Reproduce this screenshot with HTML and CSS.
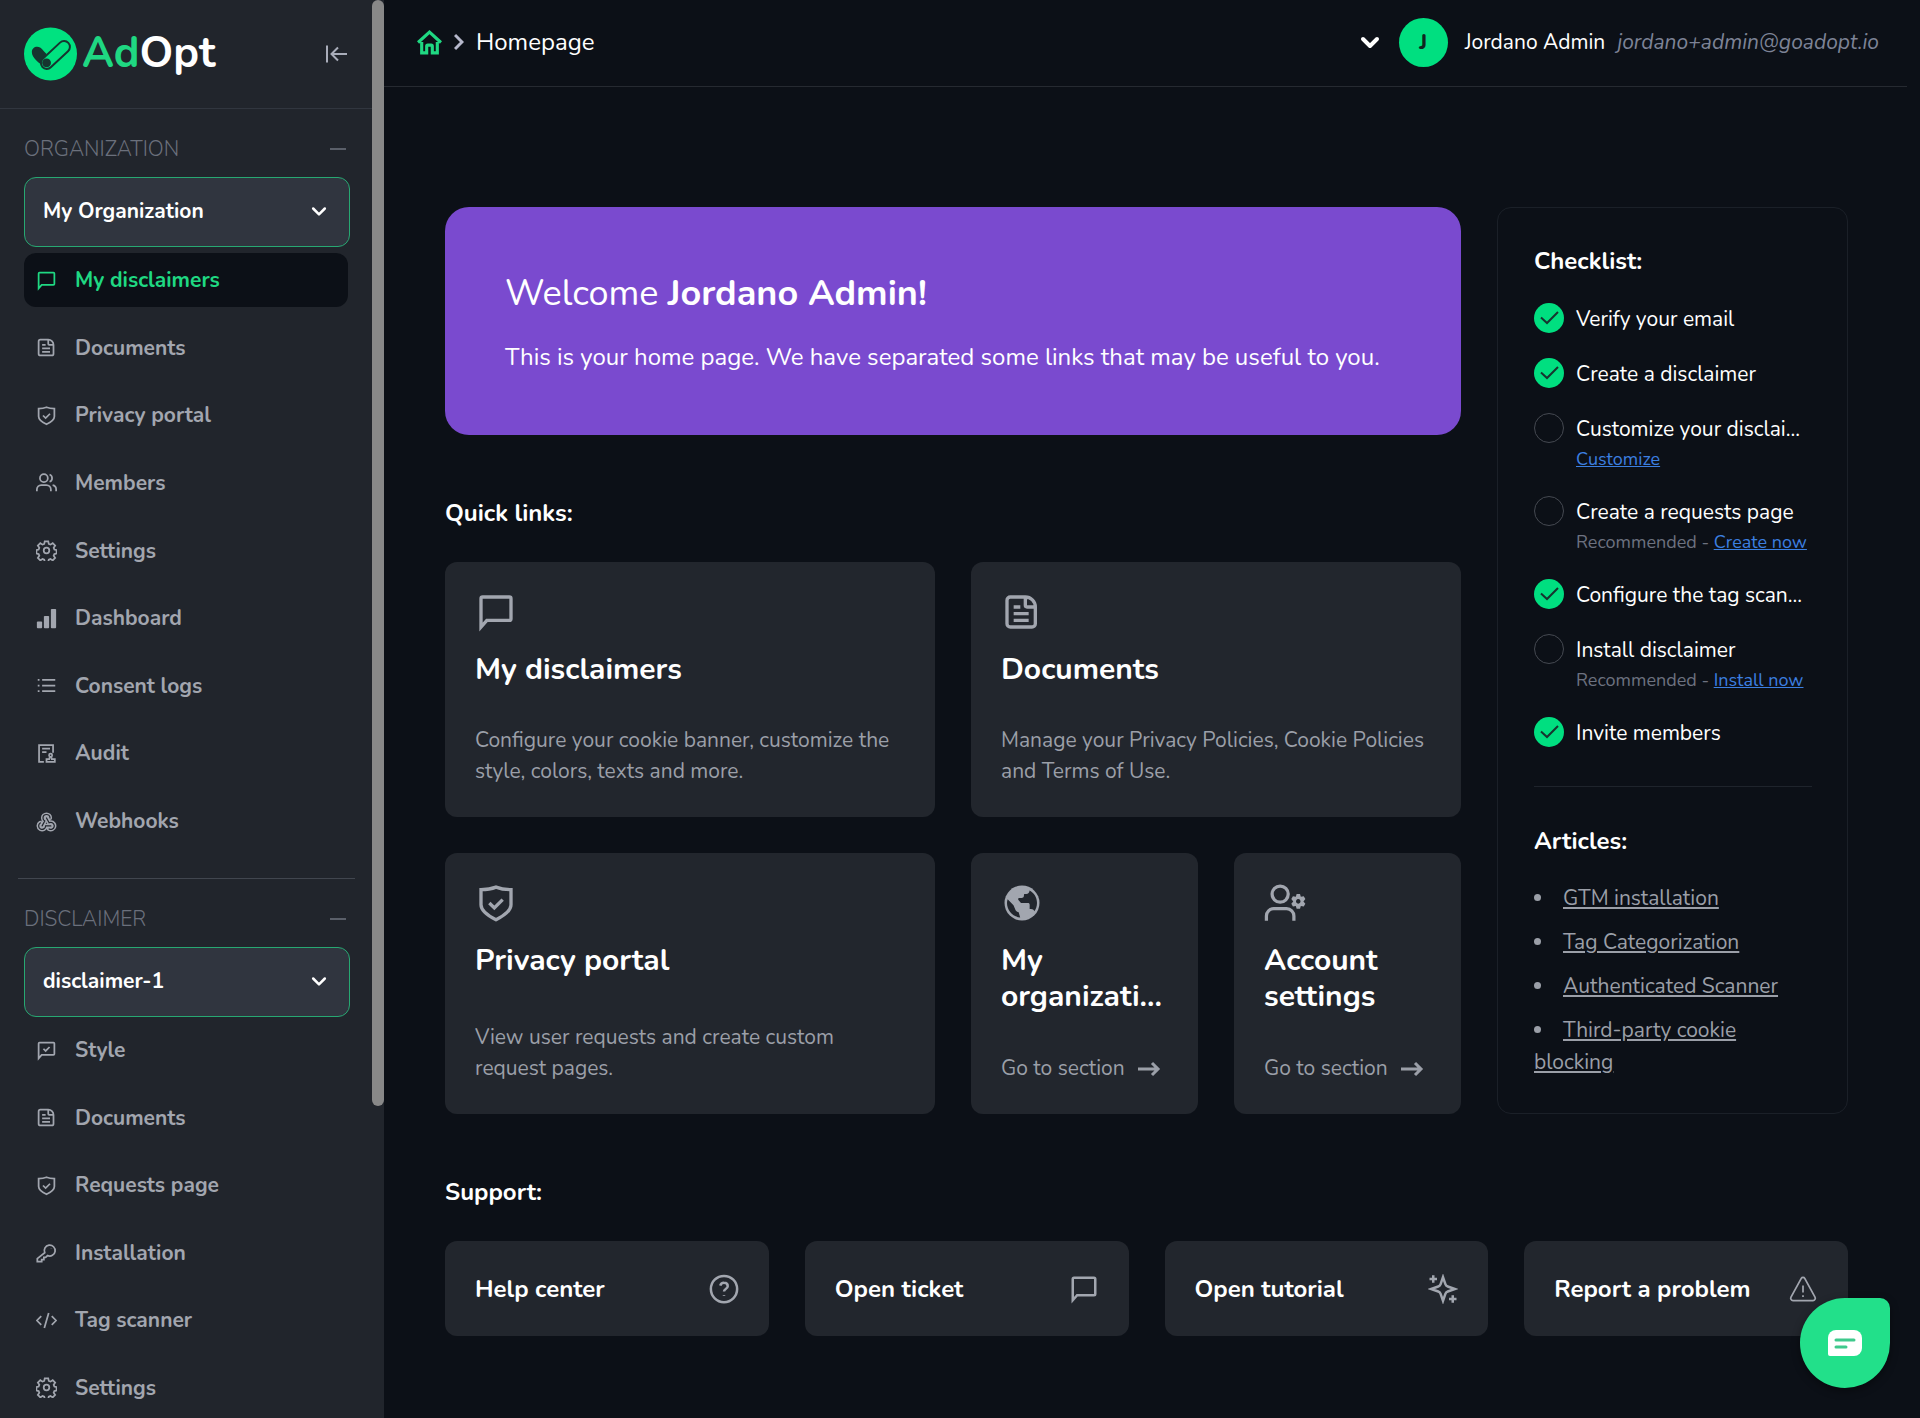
FILE: index.html
```html
<!DOCTYPE html>
<html lang="en">
<head>
  <meta charset="UTF-8" />
  <meta name="viewport" content="width=device-width, initial-scale=1.0" />
  <title>AdOpt - Homepage</title>
  <link rel="stylesheet" href="styles.css">
</head>
<body>

<!-- icon set -->
<svg class="sprite" aria-hidden="true">
  <symbol id="i-chat" viewBox="0 0 24 24"><path d="M3 21V4a1 1 0 0 1 1-1h16a1 1 0 0 1 1 1v12a1 1 0 0 1-1 1H6.500z" /></symbol>
  <symbol id="i-chat-check" viewBox="0 0 24 24"><path d="M3 21V4a1 1 0 0 1 1-1h16a1 1 0 0 1 1 1v12a1 1 0 0 1-1 1H6.500zM8.500 10l2.500 2.500 4.500-4.500" /></symbol>
  <symbol id="i-doc" viewBox="0 0 24 24"><path d="M5 3h9a6 6 0 0 1 6 6v10a2 2 0 0 1-2 2H5a2 2 0 0 1-2-2V5a2 2 0 0 1 2-2zM14 3v5a1 1 0 0 0 1 1h5M7 9h4M7 13h9M7 17h9" /></symbol>
  <symbol id="i-shield" viewBox="0 0 24 24"><path d="M12 2.500c3 1.200 5.500 1.500 9 1.500v9c0 4-5 7-9 9-4-2-9-5-9-9V4c3.500 0 6-.3 9-1.500zM8 12l3 3 5-5" /></symbol>
  <symbol id="i-users" viewBox="0 0 24 24"><circle cx="9" cy="7" r="4.500" /><path d="M1 22v-2a5 5 0 0 1 5-5h6a5 5 0 0 1 5 5v2M15.500 2.800a4.500 4.500 0 0 1 0 8.400M19 15a5 5 0 0 1 4 5v2" /></symbol>
  <symbol id="i-gear" viewBox="0 0 24 24"><circle cx="12" cy="12" r="3.200" /><path d="M10 1.500h4l.6 3 1.900.8 2.600-1.700 2.800 2.800-1.700 2.600.8 1.900 2.500.6v4l-2.500.6-.8 1.900 1.700 2.500-2.800 2.800-2.600-1.700-1.900.8-.6 2.600h-4l-.6-2.600-1.900-.8-2.600 1.700-2.800-2.800 1.700-2.500-.8-1.900-2.500-.6v-4l2.500-.6.8-1.900-1.700-2.600 2.800-2.800 2.600 1.700 1.900-.8z" /></symbol>
  <symbol id="i-bars" viewBox="0 0 24 24"><g fill="currentColor" stroke="none"><rect x="1" y="15.500" width="6" height="7.500" rx="1" /><rect x="9" y="9" width="6" height="14" rx="1" /><rect x="17" y="1" width="6" height="22" rx="1" /></g></symbol>
  <symbol id="i-list" viewBox="0 0 24 24"><path d="M7 5.500h15M7 12h15M7 18.500h15M2 5.500h2M2 12h2M2 18.500h2" /></symbol>
  <symbol id="i-audit" viewBox="0 0 24 24"><path d="M9 21.500H3.500v-19h16V11M7 6.500h9M7 10.500h5M12 21.500h9.500v-3.200H18l-.5-2.300h-1.800l-.5 2.300H12z" /><circle cx="16.700" cy="14" r="1.800" /></symbol>
  <symbol id="i-webhook" viewBox="0 0 24 24">
    <g stroke-linecap="round">
      <path stroke-width="4.800" d="M4.900 13.600A4 4 0 1 0 11 17h6M15 20.500A4 4 0 1 0 17 13c-.7 0-1.400.2-2 .5L12 8M16 8a4 4 0 1 0-8 0c0 1.500.8 2.800 2 3.500L7 17" />
      <path class="hollow" stroke-width="1.400" d="M4.900 13.600A4 4 0 1 0 11 17h6M15 20.500A4 4 0 1 0 17 13c-.7 0-1.400.2-2 .5L12 8M16 8a4 4 0 1 0-8 0c0 1.500.8 2.800 2 3.500L7 17" />
    </g>
  </symbol>
  <symbol id="i-key" viewBox="0 0 24 24"><path d="M10 12.300a6.200 6.200 0 1 1 3.200 3.200L11 17.500H9V20H6.500v2.500H1.500V19zM17.500 7v.500" /></symbol>
  <symbol id="i-code" viewBox="0 0 24 24"><path d="M6 7l-5 5 5 5M18 7l5 5-5 5M14.500 3.500l-5 17" /></symbol>
  <symbol id="i-globe" viewBox="0 0 24 24"><circle cx="12" cy="12" r="10.500" fill="currentColor" stroke="none" /><path class="land" stroke="none" d="M16.500 4.500c2.800 1.400 4.500 4.200 4.500 7.500 0 1.900-.6 3.600-1.600 5-.3-.9-1.100-1.400-2-1.400h-.8v-2.600c0-.6-.4-1-1-1h-4.200L9.700 10l.2-1h1.900c.7 0 1.200-.4 1.300-1l.2-1.400h1.300c1.100 0 1.900-.9 1.900-2.100zM3.400 9.800l3.500 3.500 1.200 2.900c.4.800 1 1.200 1.900 1.400l.9 3.100C6.500 20.200 3 16.500 3 12c0-.8.200-1.500.4-2.200z" /></symbol>
  <symbol id="i-user-gear" viewBox="0 0 26 24"><circle cx="10" cy="6.500" r="5" /><path d="M1.500 23v-3a4.500 4.500 0 0 1 4.500-4.500h8a4.500 4.500 0 0 1 4.500 4.500v3" /><path fill="currentColor" fill-rule="evenodd" stroke="none" d="M20.200 6.500h2.100l.5 1.700 1.800-.4 1 1.800-1.200 1.400 1.200 1.400-1 1.800-1.800-.4-.5 1.700h-2.100l-.5-1.700-1.800.4-1-1.800 1.200-1.400-1.200-1.400 1-1.800 1.800.4zm1 3.100a1.400 1.400 0 1 0 .01 0z" /></symbol>
  <symbol id="i-help" viewBox="0 0 24 24"><circle cx="12" cy="12" r="10.500" /><path d="M9 9.300A3 3 0 0 1 12 7c1.700 0 3 1.100 3 2.700 0 2-3 2.400-3 4.300M12 16.800v.5" /></symbol>
  <symbol id="i-spark" viewBox="0 0 24 24"><path d="M12 2.500l1.900 5.600a3 3 0 0 0 1.900 1.900l5.700 2-5.700 2a3 3 0 0 0-1.900 1.900L12 21.500l-1.900-5.600A3 3 0 0 0 8.200 14l-5.700-2 5.700-2a3 3 0 0 0 1.900-1.900zM4.200 1v6M1.200 4h6M19.800 17v6M16.800 20h6" /></symbol>
  <symbol id="i-warn" viewBox="-1 -1 26 26"><path stroke-width="1.500" d="M10.500 2.800L1.600 19a2 2 0 0 0 1.800 3h17.200a2 2 0 0 0 1.800-3L13.500 2.800a1.700 1.700 0 0 0-3 0zM12 9v6M12 17.500v1.500" /></symbol>
  <symbol id="i-down" viewBox="0 0 24 24"><path stroke-linecap="round" stroke-linejoin="round" d="M5 9l7 7 7-7" /></symbol>
  <symbol id="i-right" viewBox="1 0 10 18"><path d="M2 2l7 7-7 7" /></symbol>
  <symbol id="i-home" viewBox="0 0 24 24"><path d="M4.500 11.500V22h4.800v-6.500a1 1 0 0 1 1-1h3.400a1 1 0 0 1 1 1V22h4.800V11.500M1 12L12 2l11 10" /></symbol>
  <symbol id="i-arrow" viewBox="0 0 24 16"><path d="M1 8h20M15 2l6 6-6 6" /></symbol>
  <symbol id="i-collapse" viewBox="0 0 24 20"><path d="M3 1.500v17M23 10H8M14 3.500L7.500 10l6.500 6.500" /></symbol>
  <symbol id="i-check" viewBox="0 0 30 30"><path d="M7 14.500l6 5.500L24 9" /></symbol>
</svg>

<div class="app">
  <aside class="sidebar">
    <div class="sidebar-content">
      <div class="brand">
        <a class="logo" href="#">
          <svg class="logo-mark" viewBox="0 0 54 54">
            <circle cx="27" cy="27" r="27" fill="#00e280" />
            <path d="M22 41C15 36 8 31 8 25c0-6 8-8 12-1l3 3-5 7z" fill="#16352f" />
            <rect x="14" y="22" width="36" height="12" rx="6" transform="rotate(-43 32 28)" fill="#00e280" stroke="#16352f" stroke-width="2" />
            <circle cx="23" cy="36" r="4.500" fill="#16352f" />
          </svg>
          <span class="logo-text"><span class="logo-ad">Ad</span>Opt</span>
        </a>
        <button class="icon-btn" aria-label="Collapse menu"><svg class="icon-collapse"><use href="#i-collapse" /></svg></button>
      </div>

      <section class="menu">
        <div class="menu-title">
          <label for="organization">ORGANIZATION</label>
          <button class="icon-btn toggle" aria-label="Toggle organization menu"></button>
        </div>
        <div class="select">
          <select id="organization"><option>My Organization</option></select>
          <svg class="select-arrow"><use href="#i-down" /></svg>
        </div>
        <nav class="menu-list org-list">
          <a class="active" href="#"><svg><use href="#i-chat" /></svg>My disclaimers</a>
          <a href="#"><svg><use href="#i-doc" /></svg>Documents</a>
          <a href="#"><svg><use href="#i-shield" /></svg>Privacy portal</a>
          <a href="#"><svg><use href="#i-users" /></svg>Members</a>
          <a href="#"><svg><use href="#i-gear" /></svg>Settings</a>
          <a href="#"><svg><use href="#i-bars" /></svg>Dashboard</a>
          <a href="#"><svg><use href="#i-list" /></svg>Consent logs</a>
          <a href="#"><svg><use href="#i-audit" /></svg>Audit</a>
          <a href="#"><svg><use href="#i-webhook" /></svg>Webhooks</a>
        </nav>
      </section>

      <hr class="menu-divider" />

      <section class="menu">
        <div class="menu-title">
          <label for="disclaimer">DISCLAIMER</label>
          <button class="icon-btn toggle" aria-label="Toggle disclaimer menu"></button>
        </div>
        <div class="select">
          <select id="disclaimer"><option>disclaimer-1</option></select>
          <svg class="select-arrow"><use href="#i-down" /></svg>
        </div>
        <nav class="menu-list disclaimer-list">
          <a href="#"><svg><use href="#i-chat-check" /></svg>Style</a>
          <a href="#"><svg><use href="#i-doc" /></svg>Documents</a>
          <a href="#"><svg><use href="#i-shield" /></svg>Requests page</a>
          <a href="#"><svg><use href="#i-key" /></svg>Installation</a>
          <a href="#"><svg><use href="#i-code" /></svg>Tag scanner</a>
          <a href="#"><svg><use href="#i-gear" /></svg>Settings</a>
        </nav>
      </section>
    </div>
    <div class="scroll-track"><div class="scroll-thumb"></div></div>
  </aside>

  <div class="page">
    <header class="topbar">
      <nav class="breadcrumb">
        <a href="#" aria-label="Home"><svg class="icon-home"><use href="#i-home" /></svg></a>
        <svg class="icon-sep"><use href="#i-right" /></svg>
        <span>Homepage</span>
      </nav>
      <button class="user">
        <svg class="user-arrow"><use href="#i-down" /></svg>
        <span class="avatar">J</span>
        <span class="user-name">Jordano Admin</span>
        <em class="user-email">jordano+admin@goadopt.io</em>
      </button>
    </header>

    <main class="content">
      <div class="top-grid">
        <div class="left">
          <section class="welcome">
            <h1>Welcome <b>Jordano Admin!</b></h1>
            <p>This is your home page. We have separated some links that may be useful to you.</p>
          </section>

          <h2 class="section-title">Quick links:</h2>
          <div class="quick-grid">
            <a class="card wide" href="#">
              <svg class="card-icon"><use href="#i-chat" /></svg>
              <h3>My disclaimers</h3>
              <p>Configure your cookie banner, customize the style, colors, texts and more.</p>
            </a>
            <a class="card wide" href="#">
              <svg class="card-icon"><use href="#i-doc" /></svg>
              <h3>Documents</h3>
              <p>Manage your Privacy Policies, Cookie Policies and Terms of Use.</p>
            </a>
            <a class="card wide" href="#">
              <svg class="card-icon"><use href="#i-shield" /></svg>
              <h3>Privacy portal</h3>
              <p>View user requests and create custom request pages.</p>
            </a>
            <a class="card" href="#">
              <svg class="card-icon"><use href="#i-globe" /></svg>
              <h3>My organizati...</h3>
              <p class="go">Go to section <svg><use href="#i-arrow" /></svg></p>
            </a>
            <a class="card" href="#">
              <svg class="card-icon"><use href="#i-user-gear" /></svg>
              <h3>Account settings</h3>
              <p class="go">Go to section <svg><use href="#i-arrow" /></svg></p>
            </a>
          </div>
        </div>

        <aside class="panel">
          <h2>Checklist:</h2>
          <ul class="checklist">
            <li><svg class="mark done"><use href="#i-check" /></svg><div>Verify your email</div></li>
            <li><svg class="mark done"><use href="#i-check" /></svg><div>Create a disclaimer</div></li>
            <li><span class="mark"></span><div>Customize your disclai...<small><a href="#">Customize</a></small></div></li>
            <li><span class="mark"></span><div>Create a requests page<small>Recommended - <a href="#">Create now</a></small></div></li>
            <li><svg class="mark done"><use href="#i-check" /></svg><div>Configure the tag scan...</div></li>
            <li><span class="mark"></span><div>Install disclaimer<small>Recommended - <a href="#">Install now</a></small></div></li>
            <li><svg class="mark done"><use href="#i-check" /></svg><div>Invite members</div></li>
          </ul>
          <hr />
          <h2>Articles:</h2>
          <ul class="articles">
            <li><a href="#">GTM installation</a></li>
            <li><a href="#">Tag Categorization</a></li>
            <li><a href="#">Authenticated Scanner</a></li>
            <li><a href="#">Third-party cookie blocking</a></li>
          </ul>
        </aside>
      </div>

      <h2 class="section-title">Support:</h2>
      <div class="support-grid">
        <a class="support-card" href="#">Help center <svg><use href="#i-help" /></svg></a>
        <a class="support-card" href="#">Open ticket <svg><use href="#i-chat" /></svg></a>
        <a class="support-card" href="#">Open tutorial <svg><use href="#i-spark" /></svg></a>
        <a class="support-card" href="#">Report a problem <svg><use href="#i-warn" /></svg></a>
      </div>
    </main>
  </div>
</div>

<button class="chat-btn" aria-label="Open chat">
  <svg viewBox="0 0 34 26">
    <path d="M8 0h18a8 8 0 0 1 8 8v10a8 8 0 0 1-8 8H2a2 2 0 0 1-2-2V8a8 8 0 0 1 8-8z" fill="#fff" />
    <path d="M8 10h18M8 17h10" stroke="#3fc98c" stroke-width="3" stroke-linecap="round" />
  </svg>
</button>

</body>
</html>
```

FILE: styles.css
```css
* { box-sizing: border-box; }
body {
  font-family: 'Nunito', 'Lato', sans-serif;
  font-size: 21px;
  line-height: 32px;
  margin: 0;
  background: #0c1017;
  color: #fff;
}
a { color: inherit; text-decoration: none; }
h1, h2, h3, p, ul { margin: 0; padding: 0; }
button {
  font: inherit;
  color: inherit;
  background: none;
  border: none;
  padding: 0;
  cursor: pointer;
}
svg {
  flex: none;
  fill: none;
  stroke: currentColor;
  stroke-width: 2;
}
.sprite { display: none; }
.app { display: flex; height: 100vh; }

/* sidebar */
.sidebar {
  display: flex;
  flex: none;
  width: 384px;
  background: #21252c;
  overflow: hidden;
}
.sidebar-content { flex: 1; min-width: 0; }
.scroll-track { width: 12px; }
.scroll-thumb { height: 78%; background: #888; border-radius: 6px; }
.brand {
  display: flex;
  align-items: center;
  justify-content: space-between;
  height: 109px;
  padding: 0 24px;
  border-bottom: 1px solid #31363f;
}
.logo { display: flex; align-items: center; gap: 5px; }
.logo-mark { width: 53px; height: 54px; stroke: none; }
.logo-text { font-size: 43px; line-height: 54px; font-weight: 700; padding-bottom: 2px; }
.logo-ad { color: #1fd882; }
.icon-collapse { display: block; width: 24px; height: 20px; color: #a9adba; }

.menu { padding: 0 22px 0 24px; }
.menu-title {
  display: flex;
  align-items: center;
  justify-content: space-between;
  padding: 24px 4px 12px 0;
  font-weight: 300;
  color: #6b707c;
}
.toggle { width: 16px; height: 2px; background: #5a5f69; }
.select { position: relative; }
.select select {
  appearance: none;
  width: 100%;
  height: 70px;
  padding: 0 18px 2px;
  font: inherit;
  font-weight: 700;
  color: #fff;
  background: #30353f;
  border: 1px solid #27a872;
  border-radius: 12px;
}
.select-arrow {
  position: absolute;
  top: 24px;
  right: 21px;
  width: 20px;
  height: 20px;
  stroke-width: 3;
  pointer-events: none;
}
.menu-list {
  display: flex;
  flex-direction: column;
  justify-content: space-between;
  padding: 6px 2px 0 0;
}
.org-list { min-height: 601px; }
.disclaimer-list { min-height: 398px; }
.menu-list a {
  display: flex;
  align-items: center;
  gap: 18px;
  height: 54px;
  padding: 0 12px;
  border-radius: 12px;
  font-weight: 700;
  color: #a2a6af;
}
.menu-list svg { width: 21px; height: 21px; }
.menu-list a.active { background: #0c1017; color: #1fd882; }
.hollow { stroke: #21252c; }
.menu-divider {
  margin: 30px 17px 0 18px;
  border: none;
  border-top: 1px solid #41464f;
}

/* top bar */
.page { flex: 1; min-width: 0; overflow: hidden; }
.topbar {
  display: flex;
  align-items: center;
  justify-content: space-between;
  height: 87px;
  margin-right: 13px;
  padding: 0 28px 2px 33px;
  border-bottom: 1px solid #262a31;
}
.breadcrumb { display: flex; align-items: center; gap: 12px; font-size: 24px; }
.icon-home { display: block; width: 25px; height: 25px; color: #1fd882; stroke-width: 3; }
.icon-sep { width: 10px; height: 18px; stroke-width: 3; color: #b6b8cb; }
.user { display: flex; align-items: center; gap: 17px; }
.user-arrow { width: 24px; height: 24px; stroke-width: 4; }
.avatar {
  width: 49px;
  height: 49px;
  line-height: 49px;
  border-radius: 50%;
  background: #00df80;
  color: #10261f;
  font-weight: 800;
  text-align: center;
}
.user-email { margin-left: -5px; font-weight: 400; color: #7d8396; }

/* content */
.content { padding: 120px 72px 0 61px; }
.top-grid {
  display: grid;
  grid-template-columns: minmax(0, 1fr) 351px;
  gap: 36px;
}
.left { display: flex; flex-direction: column; }
.welcome {
  padding: 60px;
  border-radius: 24px;
  background: #7a4acf;
}
.welcome h1 { font-size: 36px; line-height: 54px; font-weight: 400; }
.welcome p { margin-top: 20px; padding-bottom: 2px; font-size: 24px; }
.section-title { margin: 62px 0 33px; font-size: 24px; line-height: 32px; font-weight: 700; }
.quick-grid {
  flex: 1;
  display: grid;
  grid-template-columns: repeat(4, minmax(0, 1fr));
  grid-template-rows: auto 1fr;
  gap: 36px;
}
.card {
  display: flex;
  flex-direction: column;
  padding: 30px;
  border-radius: 12px;
  background: #22262d;
}
.card.wide { grid-column: span 2; }
.card-icon { width: 42px; height: 40px; color: #a2a6af; }
.land { fill: #22262d; }
.card h3 { margin: 20px 0 auto; font-size: 30px; line-height: 36px; font-weight: 700; }
.card p { padding-top: 37px; line-height: 31px; color: #9b9fa8; }
.card .go { display: flex; align-items: center; gap: 12px; white-space: nowrap; }
.go svg { width: 24px; height: 16px; stroke-width: 3; }

/* checklist panel */
.panel {
  padding: 37px 35px 35px 36px;
  border: 1px solid #1b2028;
  border-radius: 14px;
}
.panel h2 { font-size: 24px; line-height: 32px; font-weight: 700; }
.panel hr { margin: 37px 0 38px; border: none; border-top: 1px solid #1f242c; }
.checklist { display: flex; flex-direction: column; gap: 23px; margin-top: 26px; list-style: none; }
.checklist li { display: flex; gap: 12px; white-space: nowrap; }
.checklist small { display: block; font-size: 18px; line-height: 28px; color: #6d7280; }
.checklist a { color: #3c7fe0; text-decoration: underline; }
.mark {
  flex: none;
  width: 30px;
  height: 30px;
  border: 1px solid #454951;
  border-radius: 50%;
}
.mark.done { border: none; background: #00df80; color: #16352f; }
.articles { margin-top: 25px; list-style: disc inside; color: #9b9fa8; }
.articles li + li { margin-top: 12px; }
.articles a { text-decoration: underline; }

/* support */
.support-grid { display: grid; grid-template-columns: repeat(4, minmax(0, 1fr)); gap: 36px; }
.support-card {
  display: flex;
  align-items: center;
  justify-content: space-between;
  height: 95px;
  padding: 0 30px;
  border-radius: 12px;
  background: #22262d;
  font-size: 24px;
  font-weight: 700;
}
.support-card svg { width: 30px; height: 30px; color: #a2a6af; }

.chat-btn {
  position: fixed;
  right: 30px;
  bottom: 30px;
  display: flex;
  align-items: center;
  justify-content: center;
  width: 90px;
  height: 90px;
  border-radius: 45px 10px 45px 45px;
  background: #22e08a;
  box-shadow: 0 3px 8px rgba(0,0,0,0.4);
}
.chat-btn svg { width: 34px; height: 26px; stroke: none; }
```
